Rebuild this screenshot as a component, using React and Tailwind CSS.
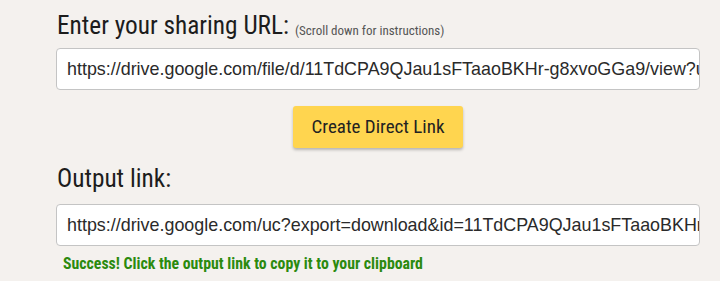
export default function App() {
  return (
    <div className="w-[720px] h-[281px] bg-[#f4f1ee] overflow-hidden">
      <div className="pl-[56px] pr-[20px] w-[720px]">
        <div className="h-[48px] flex items-end pb-[10px] pl-[1px]">
          <span className="font-['Roboto',sans-serif] font-stretch-condensed text-[25.3px] leading-none text-[#1c1c1c]">Enter your sharing URL:</span>
          <span className="ml-[6px] font-['Roboto',sans-serif] font-stretch-condensed text-[13px] leading-none text-[#555] pb-[1px]">(Scroll down for instructions)</span>
        </div>
        <div className="w-[644px] h-[42px] bg-white border border-[#c4c4c4] rounded-[4px] flex items-center pl-[10px] overflow-hidden whitespace-nowrap font-['Liberation_Sans',Arial,sans-serif] text-[17.9px] text-[#2a2a2a]">
          https://drive.google.com/file/d/11TdCPA9QJau1sFTaaoBKHr-g8xvoGGa9/view?usp=sharing
        </div>
        <div className="w-[644px] flex justify-center mt-[16px]">
          <div className="w-[170px] h-[42px] bg-[#ffd54f] rounded-[3px] shadow-[0_2px_3px_rgba(0,0,0,0.25)] flex items-center justify-center font-['Roboto',sans-serif] font-stretch-condensed text-[19px] text-[#222]">
            Create Direct Link
          </div>
        </div>
        <div className="h-[56px] flex items-end pb-[13px] pl-[1px]">
          <span className="font-['Roboto',sans-serif] font-stretch-condensed text-[25.3px] leading-none text-[#1c1c1c]">Output link:</span>
        </div>
        <div className="w-[644px] h-[42px] bg-white border border-[#c4c4c4] rounded-[4px] flex items-center pl-[10px] overflow-hidden whitespace-nowrap font-['Liberation_Sans',Arial,sans-serif] text-[17.9px] text-[#2a2a2a]">
          https://drive.google.com/uc?export=download&amp;id=11TdCPA9QJau1sFTaaoBKHr-g8xvoGGa9
        </div>
        <div className="mt-[10px] pl-[7px] font-['Roboto',sans-serif] font-stretch-condensed font-bold text-[15.8px] leading-none text-[#2b8a0e]">
          Success! Click the output link to copy it to your clipboard
        </div>
      </div>
    </div>
  );
}
